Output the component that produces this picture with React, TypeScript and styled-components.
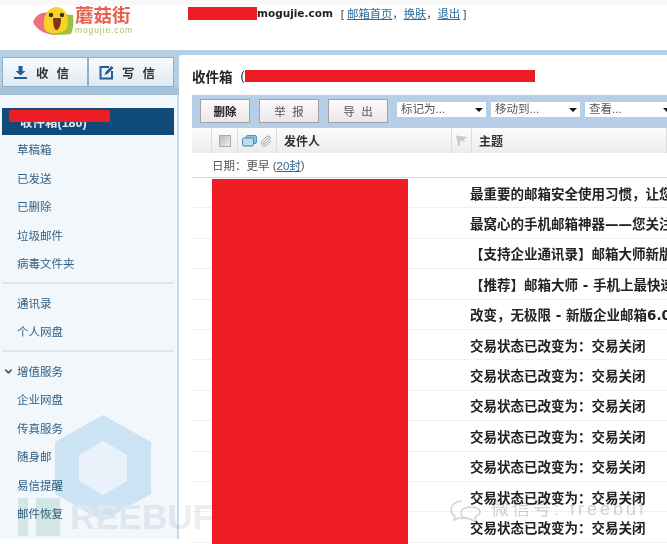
import styled, { createGlobalStyle } from "styled-components";
import { ChevronDown, Paperclip } from "lucide-react";

const GlobalStyle = createGlobalStyle`
  html, body {
    margin: 0;
    padding: 0;
    background: #fff;
  }
  * {
    box-sizing: border-box;
  }
`;

const fonts = `"Liberation Sans", "Noto Sans CJK SC", sans-serif`;

// fullwidth punctuation, the CJK font draws these
const COMMA = "\uFF0C";
const COLON = "\uFF1A";
const closedTrade = `交易状态已改变为${COLON}交易关闭`;

const folders = ["草稿箱", "已发送", "已删除", "垃圾邮件", "病毒文件夹"];
const contacts = ["通讯录", "个人网盘"];
const services = ["企业网盘", "传真服务", "随身邮", "易信提醒", "邮件恢复"];
const subjects = [
  `最重要的邮箱安全使用习惯${COMMA}让您的邮箱更安全`,
  "最窝心的手机邮箱神器——您关注的邮件",
  "【支持企业通讯录】邮箱大师新版发布了",
  "【推荐】邮箱大师 - 手机上最快速的邮箱",
  `改变${COMMA}无极限 - 新版企业邮箱6.0全新上线`,
  closedTrade,
  closedTrade,
  closedTrade,
  closedTrade,
  closedTrade,
  closedTrade,
  closedTrade,
];

const App = () => {
  return (
    <Page>
      <GlobalStyle />
      <Header>
        <Logo>
          <svg width="41" height="30" viewBox="0 0 41 30">
            <path d="M0 17 C3 9 10 6 18 8 L24 30 C14 30 4 26 0 17Z" fill="#ee6f80" />
            <path d="M14 28 C13 22 12 14 14 8 L40 10 C41 18 40 24 38 29 C30 30 20 30 14 28Z" fill="#9cc23c" />
            <path d="M12 25 C8 12 15 2 24 2 C33 3 37 13 34 23 C31 29 17 30 12 25Z" fill="#f7d126" />
            <circle cx="18" cy="10" r="2.200" fill="#332" />
            <circle cx="29" cy="10" r="2.200" fill="#332" />
            <path d="M20 13 L28 13 C28 20 26 25 23.500 25 C21 25 20 19 20 13Z" fill="#7c3518" />
          </svg>
          <LogoText>
            <LogoName>蘑菇街</LogoName>
            <LogoDomain>mogujie.com</LogoDomain>
          </LogoText>
        </Logo>
        <Account>
          <AccountRedaction />
          <strong>mogujie.com</strong>
          <AccountLinks>
            [ <a>邮箱首页</a>{COMMA}<a>换肤</a>{COMMA}<a>退出</a> ]
          </AccountLinks>
        </Account>
      </Header>
      <Body>
        <Sidebar>
          <ComposeBar>
            <ComposeButton>
              <svg width="15" height="15" viewBox="0 0 15 15">
                <path d="M5.500 1h4v5h3L7.500 10.500 2.500 6h3z" fill="#235f96" />
                <rect x="1" y="12" width="13" height="2" fill="#235f96" />
              </svg>
              <span>收信</span>
            </ComposeButton>
            <ComposeButton>
              <svg width="15" height="15" viewBox="0 0 15 15" fill="none">
                <path d="M10 2H1.500v11.500H13V6" stroke="#235f96" strokeWidth="2" />
                <path d="M5.500 10l1-3L12.500 1l2 2-6 6z" fill="#235f96" />
              </svg>
              <span>写信</span>
            </ComposeButton>
          </ComposeBar>
          <ActiveFolder>
            收件箱(180)
            <SideRedaction />
          </ActiveFolder>
          <NavGroup>
            {folders.map((name) => (
              <NavItem key={name}>{name}</NavItem>
            ))}
          </NavGroup>
          <NavGroup>
            {contacts.map((name) => (
              <NavItem key={name}>{name}</NavItem>
            ))}
          </NavGroup>
          <NavGroup>
            <NavItem>
              <Caret>
                <ChevronDown size={11} strokeWidth={3.5} />
              </Caret>
              增值服务
            </NavItem>
            {services.map((name) => (
              <NavItem key={name}>{name}</NavItem>
            ))}
          </NavGroup>
        </Sidebar>
        <Main>
          <TitleRow>
            <Title>收件箱</Title>
            <TitleParen>(</TitleParen>
            <TitleRedaction />
          </TitleRow>
          <Toolbar>
            <ToolButton $strong $width={50}>删除</ToolButton>
            <ToolButton $width={60}>举  报</ToolButton>
            <ToolButton $width={60}>导  出</ToolButton>
            <FakeSelect>标记为...</FakeSelect>
            <FakeSelect>移动到...</FakeSelect>
            <FakeSelect>查看...</FakeSelect>
          </Toolbar>
          <ColumnHeader>
            <HeadCell />
            <HeadCell $center>
              <CheckBox />
            </HeadCell>
            <HeadCell $center>
              <svg width="15" height="12" viewBox="0 0 15 12">
                <rect x="4" y="0.500" width="10.500" height="8" rx="1.500" fill="#8fbcd8" stroke="#5a8fb5" />
                <rect x="0.500" y="3" width="11" height="8" rx="1.500" fill="#b5dcef" stroke="#4a88b0" />
              </svg>
              <Paperclip size={12} color="#8a8a8a" strokeWidth={1.6} />
            </HeadCell>
            <HeadCell $pad>发件人</HeadCell>
            <HeadCell $center>
              <svg width="13" height="13" viewBox="0 0 13 13">
                <path d="M1 1.500 L12 3 L8.500 5.500 L10 8 L5 6.500 L5 12 L3.500 12 Z" fill="#c4c9cc" />
              </svg>
            </HeadCell>
            <HeadCell $pad>主题</HeadCell>
          </ColumnHeader>
          <DateRow>
            日期{COLON}更早 (<a>20封</a>)
          </DateRow>
          <Rows>
            <SenderRedaction />
            {subjects.map((subject, i) => (
              <MailRow key={i}>
                <Subject>{subject}</Subject>
              </MailRow>
            ))}
          </Rows>
        </Main>
      </Body>
      <Watermark>
        <WatermarkHex viewBox="0 0 96 106">
          <path d="M48 0 L96 27 V79 L48 106 L0 79 V27 Z" fill="#d6ebf6" />
          <path d="M48 26 L72 40 V66 L48 80 L24 66 V40 Z" fill="#f6fafd" />
        </WatermarkHex>
        <WatermarkBrand>
          <WatermarkBars />
          REEBUF
        </WatermarkBrand>
        <WatermarkChat viewBox="0 0 32 24" fill="none">
          <path d="M12 2 C6 2 1 6 1 11 C1 14 3 16 5 17 L4 21 L9 19 C12 20 15 19 17 18" stroke="#cfd3d8" strokeWidth="1.500" />
          <path d="M20 8 C14 8 11 11 11 14 C11 18 15 20 20 20 L26 23 L25 18 C29 16 30 14 30 13 C30 10 26 8 20 8Z" stroke="#cfd3d8" strokeWidth="1.500" />
        </WatermarkChat>
        <WatermarkChannel>微信号: freebuf</WatermarkChannel>
      </Watermark>
    </Page>
  );
};

export default App;

const Page = styled.div`
  position: relative;
  width: 667px;
  height: 544px;
  overflow: hidden;
  background: #fff;
  font-family: ${fonts};
`;
const Header = styled.header`
  display: flex;
  height: 50px;
  border-top: 5px solid #f8f8f8;
  background: #fff;
`;
const Logo = styled.div`
  display: flex;
  align-items: flex-start;
  gap: 1px;
  width: 188px;
  padding-left: 33px;
`;
const LogoText = styled.div`
  display: flex;
  flex-direction: column;
`;
const LogoName = styled.div`
  margin-top: 1px;
  color: #e8604c;
  font-size: 18.500px;
  font-weight: 700;
  line-height: 20px;
`;
const LogoDomain = styled.div`
  color: #a9c05c;
  font-size: 8.500px;
  line-height: 9px;
  letter-spacing: 0.900px;
`;
const Account = styled.div`
  display: flex;
  align-items: center;
  height: 14px;
  margin-top: 1px;
  color: #222;
  font-size: 11.300px;

  strong {
    font-family: "DejaVu Sans", sans-serif;
    font-size: 10.500px;
  }
`;
const AccountRedaction = styled.span`
  width: 69px;
  height: 13px;
  background: #ee1c25;
`;
const AccountLinks = styled.span`
  margin-left: 8px;
  color: #444;
  white-space: pre;

  a {
    color: #2a6a99;
    text-decoration: underline;
  }
`;
const Body = styled.div`
  display: flex;
  height: 489px;
  padding-left: 2px;
  border-top: 5px solid #b5cfe4;
  background: #b5cfe4;
`;
const Sidebar = styled.aside`
  flex: none;
  width: 179px;
  margin-left: -2px;
  padding-left: 2px;
  background: #f2f7fc;
  border-right: 2px solid #c9dae7;
`;
const ComposeBar = styled.div`
  display: flex;
  height: 40px;
  margin: 0 -2px 0 -2px;
  padding: 2px 5px 8px 2px;
  background: linear-gradient(#b5cfe4 0 32px, #a5c2d9 32px);
`;
const ComposeButton = styled.div`
  display: flex;
  flex: 1;
  align-items: center;
  justify-content: center;
  gap: 8px;
  background: linear-gradient(#f8fbfd, #dfeaf3);
  border: 1px solid #8fb0ca;
  color: #333;
  font-size: 12.500px;
  font-weight: 700;
  letter-spacing: 8px;
`;
const ActiveFolder = styled.div`
  position: relative;
  display: flex;
  align-items: center;
  width: 172px;
  height: 27px;
  margin-top: 13px;
  padding-left: 18px;
  background: #0f4a78;
  color: #dfe9f1;
  font-size: 12.500px;
  font-weight: 700;
`;
const SideRedaction = styled.span`
  position: absolute;
  left: 7px;
  top: 2px;
  width: 101px;
  height: 12px;
  background: #ee1c25;
`;
const NavGroup = styled.div`
  display: flex;
  flex-direction: column;
  width: 172px;
  padding: 0 0 4px;

  & + & {
    border-top: 2px solid #e0e6ea;
    padding-top: 5px;
  }
`;
const NavItem = styled.div`
  position: relative;
  display: flex;
  align-items: center;
  height: 28.500px;
  padding-left: 15px;
  color: #2f6187;
  font-size: 11.500px;
`;
const Caret = styled.span`
  position: absolute;
  left: 1px;
  top: 9px;
  display: flex;
  color: #555;
`;
const Main = styled.main`
  flex: 1;
  min-width: 0;
  padding-left: 13px;
  background: #fff;
  border-top-left-radius: 3px;
`;
const TitleRow = styled.div`
  display: flex;
  align-items: center;
  height: 40px;
  padding-top: 1px;
  color: #222;
`;
const Title = styled.h1`
  margin: 0;
  font-size: 13.500px;
  font-weight: 700;
`;
const TitleParen = styled.span`
  margin-left: 8px;
  font-size: 12px;
`;
const TitleRedaction = styled.span`
  width: 290px;
  height: 12px;
  background: #ee1c25;
`;
const Toolbar = styled.div`
  display: flex;
  align-items: flex-start;
  gap: 9px;
  height: 33px;
  padding: 4px 0 0 8px;
  background: #b6cfe6;
`;
const ToolButton = styled.div<{ $strong?: boolean; $width: number }>`
  display: flex;
  align-items: center;
  justify-content: center;
  flex: none;
  width: ${(p) => p.$width}px;
  height: 24px;
  background: linear-gradient(#fbfbfb, #e8e8e8);
  border: 1px solid #a3a3a3;
  color: ${(p) => (p.$strong ? "#222" : "#555")};
  font-size: 11.500px;
  font-weight: ${(p) => (p.$strong ? 700 : 400)};
  white-space: pre;
`;
const FakeSelect = styled.div`
  position: relative;
  flex: none;
  width: 89px;
  height: 15px;
  margin: 3px -4px 0 0;
  padding-left: 4px;
  background: #fff;
  color: #555;
  font-size: 11.500px;
  line-height: 14px;

  &::after {
    content: "";
    position: absolute;
    right: 3px;
    top: 6px;
    border: 4px solid transparent;
    border-top: 4px solid #111;
    border-bottom: 0;
  }
`;
const ColumnHeader = styled.div`
  display: grid;
  grid-template-columns: 20px 26px 39px 175px 20px 1fr;
  height: 25px;
  background: linear-gradient(#fcfcfc, #ececec);
`;
const HeadCell = styled.div<{ $center?: boolean; $pad?: boolean }>`
  display: flex;
  align-items: center;
  justify-content: ${(p) => (p.$center ? "center" : "flex-start")};
  gap: 3px;
  padding-left: ${(p) => (p.$pad ? 7 : 0)}px;
  border-right: 1px solid #dcdcdc;
  color: #333;
  font-size: 12px;
  font-weight: 700;
`;
const CheckBox = styled.span`
  width: 12px;
  height: 12px;
  background: linear-gradient(135deg, #bbb, #eee);
  border: 1px solid #aaa;
`;
const DateRow = styled.div`
  display: flex;
  align-items: center;
  height: 25px;
  padding-left: 20px;
  border-bottom: 1px solid #d5d8de;
  color: #555;
  font-size: 11.500px;
  white-space: pre;

  a {
    color: #2a6a99;
    text-decoration: underline;
  }
`;
const Rows = styled.div`
  position: relative;
`;
const SenderRedaction = styled.div`
  position: absolute;
  left: 20px;
  top: 1px;
  width: 196px;
  height: 400px;
  background: #ee1c25;
`;
const MailRow = styled.div`
  display: flex;
  align-items: center;
  height: 30.400px;
  padding-left: 278px;
  border-bottom: 1px solid #f0f1f3;
`;
const Subject = styled.div`
  color: #222;
  font-family: "DejaVu Sans", "Noto Sans CJK SC", sans-serif;
  font-size: 13.500px;
  font-weight: 700;
  white-space: nowrap;
`;
const Watermark = styled.div`
  position: absolute;
  inset: 0;
  pointer-events: none;
  mix-blend-mode: multiply;
`;
const WatermarkHex = styled.svg`
  position: absolute;
  left: 55px;
  top: 415px;
  width: 96px;
  height: 106px;
`;
const WatermarkBrand = styled.div`
  position: absolute;
  left: 18px;
  top: 497px;
  display: flex;
  align-items: center;
  color: #eceef0;
  font-family: "Liberation Sans", sans-serif;
  font-size: 35px;
  font-weight: 700;
  line-height: 40px;
`;
const WatermarkBars = styled.span`
  width: 42px;
  height: 38px;
  margin-right: 10px;
  background: linear-gradient(90deg, #deeee7 0 10px, transparent 10px 18px, #deeee7 18px);
`;
const WatermarkChat = styled.svg`
  position: absolute;
  left: 450px;
  top: 499px;
  width: 32px;
  height: 24px;
`;
const WatermarkChannel = styled.div`
  position: absolute;
  left: 491px;
  top: 497px;
  color: #cfd3d8;
  font-size: 18px;
  letter-spacing: 3px;
  line-height: 24px;
  white-space: nowrap;
`;
